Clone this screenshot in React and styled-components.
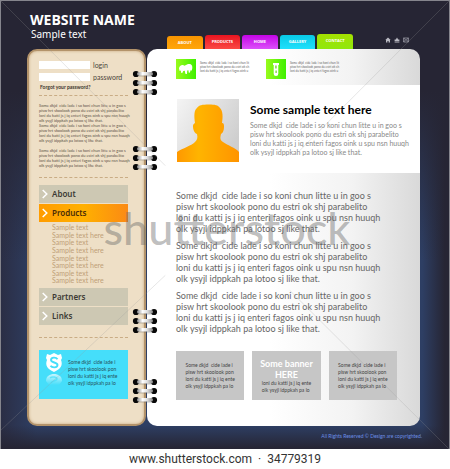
import React from "react";
import styled, { createGlobalStyle } from "styled-components";

const GlobalStyle = createGlobalStyle`
  * { box-sizing: border-box; }
  body { margin: 0; background: #fff; font-family: Lato, "Noto Sans", sans-serif; font-variant-ligatures: none; }
  a { color: inherit; text-decoration: none; }
  p, h1, h2, ul { margin: 0; padding: 0; }
  ul { list-style: none; }
`;

const Page = styled.div`
  display: flex;
  flex-direction: column;
  min-height: 100vh;
`;

const Scene = styled.div`
  position: relative;
  display: flex;
  flex-direction: column;
  padding: 0 29px 0 26px;
  border: 1px solid #85858d;
  border-bottom: 0;
  background:
    linear-gradient(to bottom, #262534 0, #262534 90px, transparent 260px, transparent 424px, #262534 447px),
    linear-gradient(to right, #2b2e45 0, transparent 8%, transparent 94%, #262534 99%),
    #2e3f64;
`;

const Header = styled.header`
  display: flex;
  height: 48px;
`;

const Brand = styled.div`
  flex: 0 0 140px;
  padding: 10px 0 0 3px;
  color: #fff;
`;

const SiteName = styled.h1`
  font: bold 14px/18px "Open Sans", sans-serif;
  white-space: nowrap;
`;

const Tagline = styled.p`
  padding-left: 1px;
  font: 10px/10px "Noto Sans", sans-serif;
`;

const Tabs = styled.nav`
  display: flex;
  flex: 1;
  align-items: flex-end;
  gap: 2px;
  max-width: 186px;
`;

const Tab = styled.a`
  flex: 1;
  height: ${(p) => p.$height}px;
  border-radius: 3px 3px 0 0;
  background: linear-gradient(to bottom, ${(p) => p.$from}, ${(p) => p.$to});
  color: #fff;
  font: bold 4px/14px "Open Sans", sans-serif;
  text-align: center;
`;

const Tools = styled.div`
  display: flex;
  gap: 3px;
  padding: 36px 0 0 32px;
`;

const Tool = styled.a`
  display: block;
  width: 6px;
  height: 6px;
  svg { display: block; width: 6px; height: 6px; }
`;

const Book = styled.div`
  position: relative;
  display: flex;
  gap: 1px;
`;

const Sidebar = styled.aside`
  flex: 0 0 119px;
  min-width: 0;
  display: flex;
  flex-direction: column;
  padding: 10px 16px 24px 10px;
  border: 2px solid #b3936a;
  border-radius: 10px;
  background: #eedfc6;
  box-shadow: inset 0 0 3px #c5a67c;
`;

const Login = styled.form`
  display: grid;
  grid-template-columns: 51px 1fr;
  gap: 4px 3px;
  align-items: center;
`;

const Field = styled.input`
  width: 100%;
  height: 8px;
  padding: 0 2px;
  border: 0;
  outline: 0;
  background: #fff;
  font-size: 6px;
`;

const Label = styled.label`
  font-size: 7px;
  line-height: 8px;
  color: #4c453b;
`;

const Forgot = styled.a`
  margin: 2px 0 0 1px;
  font: bold 5px/8px Lato, sans-serif;
  color: #3a342c;
`;

const Divider = styled.hr`
  width: 100%;
  margin: ${(p) => p.$top}px 0 ${(p) => p.$bottom}px;
  border: 0;
  border-top: 1px dashed #c9ac85;
`;

const Copy = styled.p`
  font-size: ${(p) => p.$size}px;
  line-height: ${(p) => p.$line}px;
  color: ${(p) => p.$color || "#666"};
  white-space: pre;
`;

const SideText = styled.div`
  display: flex;
  flex-direction: column;
  gap: 5px;
`;

const Menu = styled.nav`
  display: flex;
  flex-direction: column;
  gap: 1px;
`;

const MenuItem = styled.a`
  display: flex;
  align-items: center;
  gap: 4px;
  height: 18px;
  padding-left: 3px;
  background: ${(p) => (p.$active ? "linear-gradient(to right, #ff9c00, #ffb000 50%, #fb8a14)" : "#cdc8b3")};
  color: ${(p) => (p.$active ? "#4a2c08" : "#3c3a34")};
  font: 600 8px/18px "Noto Sans", sans-serif;
  svg { width: 6px; height: 10px; }
`;

const Submenu = styled.ul`
  display: grid;
  grid-auto-rows: 1fr;
  height: 61px;
  margin: 1px 0 2px 13px;
  color: #bfa078;
  font-size: 7px;
  line-height: 7px;
`;

const Promo = styled.section`
  display: flex;
  align-items: flex-start;
  gap: 5px;
  height: 49px;
  padding: 3px 0 0 6px;
  background: #45defa;
  > svg { flex: none; width: 18px; height: 36px; }
  > p { padding-top: 6px; }
`;

const Main = styled.main`
  flex: 1;
  min-width: 0;
  overflow: hidden;
  border-radius: 10px;
  background: linear-gradient(to right, #fff 45%, #f3f3f3 75%, #d9d9d9);
`;

const Features = styled.div`
  display: flex;
  gap: 16px;
  height: 36px;
  padding: 10px 0 0 29px;
`;

const Feature = styled.div`
  display: flex;
  gap: 4px;
  flex: 0 0 74px;
`;

const FeatureIcon = styled.span`
  flex: none;
  width: 20px;
  height: 20px;
  background: linear-gradient(to right, #98fb1c, #3ff000);
  svg { display: block; width: 20px; height: 20px; }
`;

const FeatureCopy = styled(Copy)`
  padding-top: 2px;
`;

const Profile = styled.section`
  display: flex;
  gap: 11px;
  height: 88px;
  padding: 14px 0 0 30px;
  background: #fff;
  > svg { flex: none; width: 62px; height: 63px; }
`;

const ProfileTitle = styled.h2`
  padding: 3px 0 3px;
  font: bold 12px/16px Lato, sans-serif;
  color: #000;
  white-space: nowrap;
`;

const Article = styled.article`
  display: flex;
  flex-direction: column;
  gap: 6px;
  padding: 17px 0 0 29px;
`;

const Banners = styled.div`
  display: grid;
  grid-template-columns: repeat(3, 1fr);
  gap: 8px;
  padding: 17px 23px 26px 29px;
`;

const Banner = styled.section`
  display: flex;
  flex-direction: column;
  justify-content: center;
  align-items: center;
  height: 49px;
  background: #c6c6c6;
`;

const BannerTitle = styled.h2`
  font: bold 9px/11px Lato, sans-serif;
  color: #fff;
  text-align: center;
`;

const Rings = styled.div`
  position: absolute;
  top: ${(p) => p.$top}px;
  left: 105px;
  display: flex;
  svg { width: 26px; height: 26px; }
`;

const Copyright = styled.footer`
  height: 23px;
  padding-top: 6px;
  margin-right: -2px;
  color: #6c90e6;
  font-size: 5px;
  line-height: 8px;
  text-align: right;
`;

const Lines = styled.svg`
  position: absolute;
  inset: 0;
  width: 100%;
  height: 100%;
  pointer-events: none;
`;

const Watermark = styled.div`
  position: absolute;
  top: 197px;
  left: 4px;
  right: 0;
  text-align: center;
  color: rgba(100, 100, 100, 0.42);
  font: 500 45px/60px Lato, sans-serif;
  pointer-events: none;
`;

const Caption = styled.p`
  padding-top: 2px;
  font: 12px/16px Roboto, sans-serif;
  color: #333;
  text-align: center;
  white-space: pre;
`;

const FULL = `Some dkjd  cide lade i so koni chun litte u in goo s
pisw hrt skoolook pono du estri ok shj parabelito
loni du katti js j iq enteri fagos oink u spu nsn huuqh
olk ysyjl idppkah pa lotoo sj like that.`;
const SHORT = `Some dkjd  cide lade i
pisw hrt skoolook pon
loni du katti js j iq ente
olk ysyjl idppkah pa lo`;
const FEATURE = `Some dkjd  cide lade i so koni chun lit
pisw hrt skoolook pono du estri ok sh
loni du katti js j iq enteri fagos oink u`;

const TABS = [
  ["About", "#f79400", "#ffa60a", 13],
  ["Products", "#e81420", "#fb4a45", 14],
  ["Home", "#c304e6", "#dc50fa", 14],
  ["Gallery", "#08c9e6", "#20e0fb", 14],
  ["Contact", "#a4e000", "#90e80c", 15],
];
const SUBMENU = Array.from({ length: 8 }, (_, i) => (i % 2 ? "Sample text here" : "Sample text"));
const RING_TOPS = [21, 96, 259, 329];

const Chevron = () => (
  <svg viewBox="0 0 6 10" fill="none" stroke="#fff" strokeWidth="1.5">
    <path d="M.7 1 4.8 5 .7 9" />
  </svg>
);

const RingSet = () => (
  <svg viewBox="0 0 26 26">
    <defs>
      <linearGradient id="wire" x1="0" x2="1">
        <stop offset="0" stopColor="#8c8c8c" />
        <stop offset=".35" stopColor="#fff" />
        <stop offset=".65" stopColor="#ddd" />
        <stop offset="1" stopColor="#888" />
      </linearGradient>
    </defs>
    {[4, 13, 22].map((y) => (
      <g key={y}>
        <circle cx="4" cy={y} r="3.1" fill="#080808" />
        <circle cx="22" cy={y} r="3.1" fill="#080808" />
        <rect x="5" y={y - 1.6} width="16" height="4" rx="2" fill="#555" opacity=".35" />
        <rect x="5" y={y - 2} width="16" height="3.6" rx="1.8" fill="url(#wire)" />
      </g>
    ))}
  </svg>
);

export default function App() {
  return (
    <Page>
      <GlobalStyle />
      <Scene>
        <Header>
          <Brand>
            <SiteName>WEBSITE NAME</SiteName>
            <Tagline>Sample text</Tagline>
          </Brand>
          <Tabs>
            {TABS.map(([name, from, to, height]) => (
              <Tab key={name} href="#" $from={from} $to={to} $height={height}>
                {name.toUpperCase()}
              </Tab>
            ))}
          </Tabs>
          <Tools>
            <Tool href="#" aria-label="Home">
              <svg viewBox="0 0 6 6" fill="#b9b9c2"><path d="M3 .5 5.7 3H5v2.5H3.6V4H2.4v1.5H1V3H.3Z" /></svg>
            </Tool>
            <Tool href="#" aria-label="Site map">
              <svg viewBox="0 0 6 6" fill="#b9b9c2"><path d="M3 .4 4.2 2.4H5.4V4H.6V2.4h1.2ZM.6 4.6h4.8v.9H.6Z" /></svg>
            </Tool>
            <Tool href="#" aria-label="Mail">
              <svg viewBox="0 0 6 6" fill="none" stroke="#a5a5b0" strokeWidth=".7"><path d="M.6 1h4.8v4H.6ZM.6 1 3 3.2 5.4 1M.6 5l1.8-2M5.4 5 3.6 3" /></svg>
            </Tool>
          </Tools>
        </Header>

        <Book>
          <Sidebar>
            <Login>
              <Field id="login" type="text" />
              <Label htmlFor="login">login</Label>
              <Field id="password" type="password" />
              <Label htmlFor="password">password</Label>
            </Login>
            <Forgot href="#">Forgot your password?</Forgot>
            <Divider $top={4} $bottom={7} />
            <SideText>
              <Copy $size={4} $line={5} $color="#5c5347">{FULL + "\n" + FULL}</Copy>
              <Copy $size={4} $line={5} $color="#5c5347">{FULL}</Copy>
            </SideText>
            <Divider $top={9} $bottom={7} />
            <Menu>
              <MenuItem href="#"><Chevron />About</MenuItem>
              <MenuItem href="#" $active><Chevron />Products</MenuItem>
              <Submenu>
                {SUBMENU.map((text, i) => (
                  <li key={i}><a href="#">{text}</a></li>
                ))}
              </Submenu>
              <MenuItem href="#"><Chevron />Partners</MenuItem>
              <MenuItem href="#"><Chevron />Links</MenuItem>
            </Menu>
            <Divider $top={12} $bottom={12} />
            <Promo>
              <svg viewBox="0 0 18 36">
                <defs>
                  <linearGradient id="fade" x1="0" y1="0" x2="0" y2="1">
                    <stop offset="0" stopColor="#fff" stopOpacity=".7" />
                    <stop offset="1" stopColor="#fff" stopOpacity="0" />
                  </linearGradient>
                </defs>
                <path d="M2 1 5 2 9 0l4 2 3-1 1 4-1 2c2 5 0 9-7 12C2 16 0 12 2 7L1 5Z" fill="#fff" />
                <path d="M12.5 6.2C11 4 6 4 6 7c0 3 6.500 2 6.500 5 0 3-5.500 3-7 .8" fill="none" stroke="#45defa" strokeWidth="1.9" />
                <path d="M1 28c0-5 4-7 8-7s8 2 8 7l-3 4H4Z" fill="url(#fade)" />
                <path d="M5 25c2-2 7-1 7 1s-5 2-6 4" fill="none" stroke="#45defa" strokeWidth="1.5" opacity=".7" />
              </svg>
              <Copy $size={5} $line={7} $color="#25525c">{SHORT}</Copy>
            </Promo>
          </Sidebar>

          <Main>
            <Features>
              <Feature>
                <FeatureIcon>
                  <svg viewBox="0 0 20 20" fill="#fff">
                    <path d="M3 9.500C3.200 7 5 5.800 7 6l1.500.8L11 5.500c2-.8 4.500-.5 5 1.200.6 1.800.3 3.600-.6 5l-.9-.4-.5 2.200-1.200.3-.4-2.500-1.200.2-.2 3.500-1.700-.2-.5-3-1.600.2-.7 1.700-1.300.2-.3-2.400-1.300.4Z" />
                  </svg>
                </FeatureIcon>
                <FeatureCopy $size={3} $line={4}>{FEATURE}</FeatureCopy>
              </Feature>
              <Feature>
                <FeatureIcon>
                  <svg viewBox="0 0 20 20">
                    <path d="M7 4h6v2h-.7v8.700a2.300 2.300 0 0 1-4.600 0V6H7Z" fill="#fff" />
                    <path d="M9.300 6.500h1.300v3H9.300Zm.2 5h1.200v2.500H9.500Z" fill="#67d51a" />
                  </svg>
                </FeatureIcon>
                <FeatureCopy $size={3} $line={4}>{FEATURE}</FeatureCopy>
              </Feature>
            </Features>

            <Profile>
              <svg viewBox="0 0 62 63">
                <defs>
                  <linearGradient id="photo" x1="0" y1="0" x2="1" y2=".6">
                    <stop offset="0" stopColor="#f4f4f4" />
                    <stop offset="1" stopColor="#cecece" />
                  </linearGradient>
                  <linearGradient id="person" x1="0" x2="1">
                    <stop offset="0" stopColor="#ff9800" />
                    <stop offset=".35" stopColor="#ffb400" />
                    <stop offset="1" stopColor="#ff9400" />
                  </linearGradient>
                </defs>
                <path d="M0 0h62v63H0Z" fill="url(#photo)" />
                <path d="M0 63V53c6-4 14-6 18-10 2-2 3-4 2-8-3-1-4-5-4-8 0-2 1-2 2-3-1-7-1-13 2-15 2-3 5-3.500 12-3.500 6 0 9 .5 11 3.500 3 3 3 9 2 15 2 0 2 2 2 4 0 3-1 6-3 7-1 4-1 6 2 8 5 4 12 5 16 10v10Z" fill="url(#person)" />
              </svg>
              <div>
                <ProfileTitle>Some sample text here</ProfileTitle>
                <Copy $size={7} $line={9} $color="#888">{FULL}</Copy>
              </div>
            </Profile>

            <Article>
              {[0, 1, 2].map((i) => (
                <Copy key={i} $size={9} $line={11}>{FULL}</Copy>
              ))}
            </Article>

            <Banners>
              <Banner><Copy $size={5} $line={7} $color="#444">{SHORT}</Copy></Banner>
              <Banner>
                <BannerTitle>Some banner<br />HERE</BannerTitle>
                <Copy $size={5} $line={7} $color="#444">{SHORT.split("\n").slice(2).join("\n")}</Copy>
              </Banner>
              <Banner><Copy $size={5} $line={7} $color="#444">{SHORT}</Copy></Banner>
            </Banners>
          </Main>

          {RING_TOPS.map((top) => (
            <Rings key={top} $top={top}><RingSet /></Rings>
          ))}
        </Book>

        <Copyright>All Rights Reserved ©  Design are copyrighted.</Copyright>

        <Lines viewBox="0 0 450 449" preserveAspectRatio="none" fill="none" stroke="#999" strokeOpacity=".25">
          <path d="M0 0 165 165M450 0 300 150M0 430 165 275M450 449 290 290" />
        </Lines>
        <Watermark aria-hidden="true">shutterstock</Watermark>
      </Scene>
      <Caption>www.shutterstock.com  ·  34779319</Caption>
    </Page>
  );
}
